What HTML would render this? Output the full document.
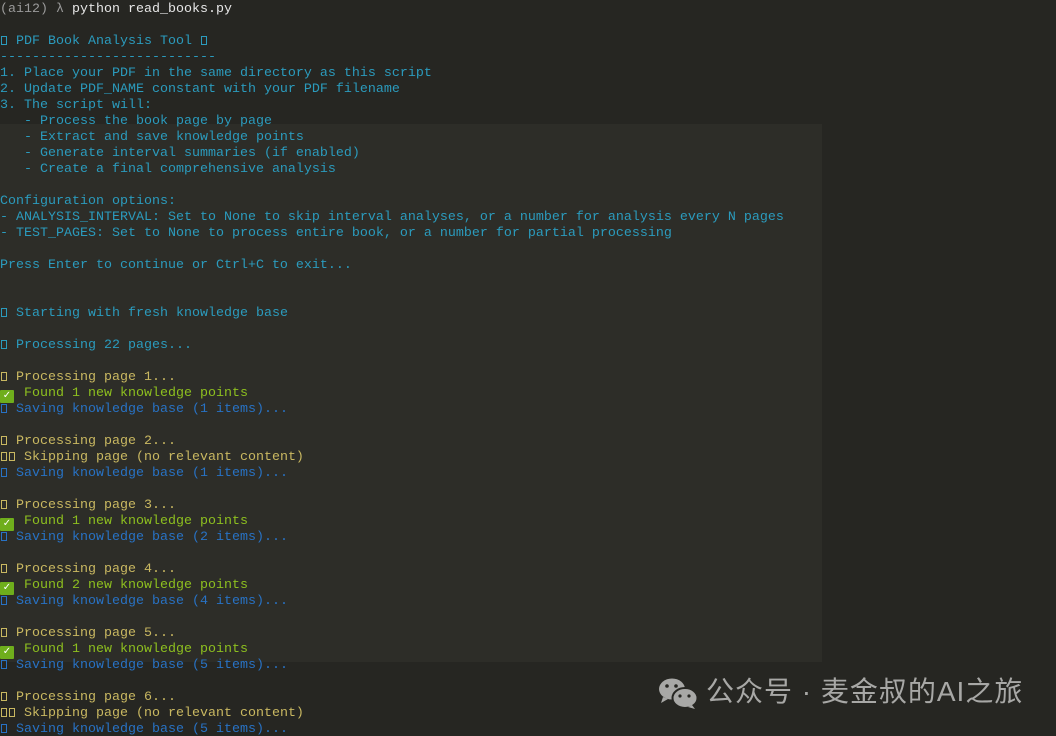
<!DOCTYPE html>
<html><head><meta charset="utf-8"><style>
html,body{margin:0;padding:0;background:#262622;width:1056px;height:736px;overflow:hidden;position:relative}
.ghost{position:absolute;left:0;top:124px;width:822px;height:538px;background:#2d2d28}
.term{position:absolute;left:0;top:2px;font-family:"Liberation Mono",monospace;font-size:13.33px;line-height:16px;}
.l{height:16px;white-space:pre}
.p{color:#9a9a9a}.w{color:#e6e6e6}
.c{color:#2b9bbd}.y{color:#c9b861}.g{color:#8dbf1f}.b{color:#2872c4}
.bx{display:inline-block;width:6px;height:9px;border:1px solid currentColor;box-sizing:border-box;margin:0 1px;vertical-align:-1px}
.ck{display:inline-block;width:14px;height:13px;background:#6fae1c;color:#fff;font-size:10px;line-height:13px;text-align:center;vertical-align:-2px;border-radius:1px;margin-right:2px}
.wm{position:absolute;left:706px;top:674px;font-family:"Liberation Sans","Noto Sans CJK SC",sans-serif;font-size:28px;letter-spacing:1px;color:#a8a8a6;line-height:36px;white-space:nowrap}
.wi{position:absolute;left:658px;top:678px}
</style></head><body>
<div class="ghost"></div>
<div class="term"><div class="l"><span class="p">(ai12) λ </span><span class="w">python read_books.py</span></div><div class="l"></div><div class="l c"><span class="bx"></span> PDF Book Analysis Tool <span class="bx"></span></div><div class="l c">---------------------------</div><div class="l c">1. Place your PDF in the same directory as this script</div><div class="l c">2. Update PDF_NAME constant with your PDF filename</div><div class="l c">3. The script will:</div><div class="l c">   - Process the book page by page</div><div class="l c">   - Extract and save knowledge points</div><div class="l c">   - Generate interval summaries (if enabled)</div><div class="l c">   - Create a final comprehensive analysis</div><div class="l"></div><div class="l c">Configuration options:</div><div class="l c">- ANALYSIS_INTERVAL: Set to None to skip interval analyses, or a number for analysis every N pages</div><div class="l c">- TEST_PAGES: Set to None to process entire book, or a number for partial processing</div><div class="l"></div><div class="l c">Press Enter to continue or Ctrl+C to exit...</div><div class="l"></div><div class="l"></div><div class="l c"><span class="bx"></span> Starting with fresh knowledge base</div><div class="l"></div><div class="l c"><span class="bx"></span> Processing 22 pages...</div><div class="l"></div><div class="l y"><span class="bx"></span> Processing page 1...</div><div class="l g"><span class="ck">✓</span> Found 1 new knowledge points</div><div class="l b"><span class="bx"></span> Saving knowledge base (1 items)...</div><div class="l"></div><div class="l y"><span class="bx"></span> Processing page 2...</div><div class="l y"><span class="bx"></span><span class="bx"></span> Skipping page (no relevant content)</div><div class="l b"><span class="bx"></span> Saving knowledge base (1 items)...</div><div class="l"></div><div class="l y"><span class="bx"></span> Processing page 3...</div><div class="l g"><span class="ck">✓</span> Found 1 new knowledge points</div><div class="l b"><span class="bx"></span> Saving knowledge base (2 items)...</div><div class="l"></div><div class="l y"><span class="bx"></span> Processing page 4...</div><div class="l g"><span class="ck">✓</span> Found 2 new knowledge points</div><div class="l b"><span class="bx"></span> Saving knowledge base (4 items)...</div><div class="l"></div><div class="l y"><span class="bx"></span> Processing page 5...</div><div class="l g"><span class="ck">✓</span> Found 1 new knowledge points</div><div class="l b"><span class="bx"></span> Saving knowledge base (5 items)...</div><div class="l"></div><div class="l y"><span class="bx"></span> Processing page 6...</div><div class="l y"><span class="bx"></span><span class="bx"></span> Skipping page (no relevant content)</div><div class="l b"><span class="bx"></span> Saving knowledge base (5 items)...</div></div>
<svg class="wi" width="42" height="32" viewBox="0 0 42 32">
<ellipse cx="14" cy="11" rx="13" ry="10.5" fill="#a8a8a6"/>
<path d="M5 19 L3 25 L10 21Z" fill="#a8a8a6"/>
<ellipse cx="27" cy="20" rx="12.5" ry="10" fill="#a8a8a6" stroke="#262622" stroke-width="2"/>
<path d="M34 27 L37 31 L30 29Z" fill="#a8a8a6"/>
<circle cx="9" cy="8" r="1.8" fill="#262622"/><circle cx="18" cy="8" r="1.8" fill="#262622"/>
<circle cx="22" cy="18" r="1.6" fill="#262622"/><circle cx="31" cy="18" r="1.6" fill="#262622"/>
</svg>
<div class="wm">公众号 · 麦金叔的AI之旅</div>
</body></html>
